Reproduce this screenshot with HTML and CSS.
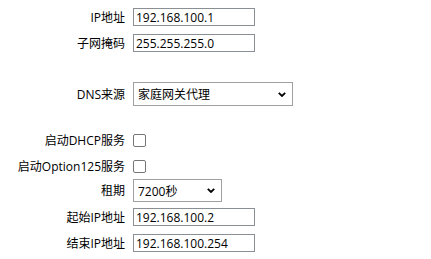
FILE: index.html
```html
<!DOCTYPE html>
<html lang="zh-CN">
<head>
    <meta charset="UTF-8">
    <meta name="viewport" content="width=device-width, initial-scale=1.0">
    <title>DHCP设置</title>
    <link rel="stylesheet" href="styles.css">
</head>
<body>
    <form class="form-lan" action="#">
        <div class="row">
            <label class="lbl" for="ip">IP地址</label>
            <input class="txt" type="text" id="ip" value="192.168.100.1">
        </div>
        <div class="row">
            <label class="lbl" for="mask">子网掩码</label>
            <input class="txt" type="text" id="mask" value="255.255.255.0">
        </div>

        <div class="row row-dns">
            <label class="lbl">DNS来源</label>
            <div class="sel sel-dns">
                <span>家庭网关代理</span>
                <svg class="chev" width="8" height="5" viewBox="0 0 8 5"><path d="M0.8 0.8 L4 4 L7.2 0.8" fill="none" stroke="#000" stroke-width="1.8"/></svg>
            </div>
        </div>

        <div class="row row-dhcp">
            <label class="lbl" for="dhcp">启动DHCP服务</label>
            <input class="chk" type="checkbox" id="dhcp">
        </div>
        <div class="row">
            <label class="lbl" for="opt125">启动Option125服务</label>
            <input class="chk" type="checkbox" id="opt125">
        </div>
        <div class="row row-lease">
            <label class="lbl">租期</label>
            <div class="sel sel-lease">
                <span>7200秒</span>
                <svg class="chev" width="8" height="5" viewBox="0 0 8 5"><path d="M0.8 0.8 L4 4 L7.2 0.8" fill="none" stroke="#000" stroke-width="1.8"/></svg>
            </div>
        </div>
        <div class="row">
            <label class="lbl" for="start">起始IP地址</label>
            <input class="txt" type="text" id="start" value="192.168.100.2">
        </div>
        <div class="row">
            <label class="lbl" for="end">结束IP地址</label>
            <input class="txt" type="text" id="end" value="192.168.100.254">
        </div>
    </form>
</body>
</html>
```

FILE: styles.css
```css
*{
    margin: 0;
    padding: 0;
    box-sizing: border-box;
}
body{
    background-color: #fff;
    color: #000;
    font-family: "Open Sans", "Noto Sans CJK SC", sans-serif;
    font-size: 12px;
}
.form-lan{
    padding-top: 4px;
    display: flex;
    flex-direction: column;
}
.row{
    height: 26px;
    display: flex;
    align-items: center;
    gap: 8px;
}
.row-dns{
    margin-top: 25px;
}
.row-dhcp{
    margin-top: 20px;
}
.row-lease{
    height: 25px;
    align-items: flex-start;
}
.lbl{
    width: 125px;
    text-align: right;
    white-space: nowrap;
}
.row-lease .lbl{
    line-height: 23px;
}
.txt{
    width: 122px;
    height: 18px;
    padding: 0 2px;
    border: 1px solid #8a8f96;
    font: inherit;
    color: #000;
    outline: none;
}
.chk{
    appearance: none;
    width: 13px;
    height: 13px;
    border: 1px solid #767676;
    border-radius: 2px;
    background: #fff;
}
.sel{
    display: flex;
    align-items: center;
    justify-content: space-between;
    padding: 0 6px 0 4px;
    border: 1px solid #a0a0a0;
    background: #fff;
}
.sel-dns{
    width: 160px;
    height: 24px;
}
.sel-lease{
    width: 89px;
    height: 23px;
}
.chev{
    display: block;
}
```
